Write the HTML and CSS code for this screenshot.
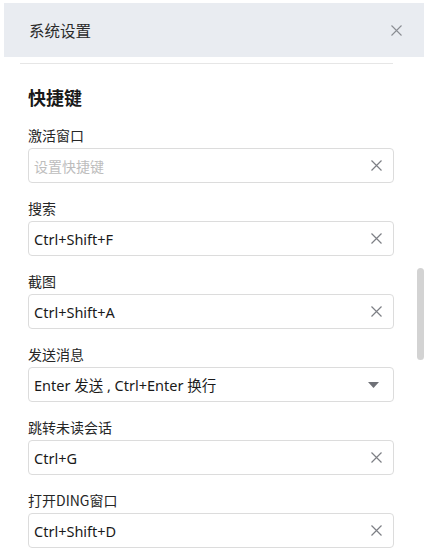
FILE: index.html
```html
<!DOCTYPE html>
<html lang="zh-CN">
<head>
<meta charset="utf-8">
<title>系统设置</title>
<link rel="stylesheet" href="styles.css">
</head>
<body>
<div class="panel">
  <div class="header">
    <span class="title">系统设置</span>
    <svg class="close" width="11" height="11" viewBox="0 0 11 11"><path d="M0.5 0.5L10.5 10.5M10.5 0.5L0.5 10.5" stroke="#8a8d93" stroke-width="1.1" fill="none"/></svg>
  </div>
  <div class="divider"></div>
  <div class="content">
    <h2 class="section">快捷键</h2>

    <div class="field">
      <div class="label">激活窗口</div>
      <div class="input"><span class="value placeholder">设置快捷键</span>
        <svg class="clear" width="11" height="11" viewBox="0 0 11 11"><path d="M0.5 0.5L10.5 10.5M10.5 0.5L0.5 10.5" stroke="#7d7f85" stroke-width="1.2" fill="none"/></svg></div>
    </div>

    <div class="field">
      <div class="label">搜索</div>
      <div class="input"><span class="value">Ctrl+Shift+F</span>
        <svg class="clear" width="11" height="11" viewBox="0 0 11 11"><path d="M0.5 0.5L10.5 10.5M10.5 0.5L0.5 10.5" stroke="#7d7f85" stroke-width="1.2" fill="none"/></svg></div>
    </div>

    <div class="field">
      <div class="label">截图</div>
      <div class="input"><span class="value">Ctrl+Shift+A</span>
        <svg class="clear" width="11" height="11" viewBox="0 0 11 11"><path d="M0.5 0.5L10.5 10.5M10.5 0.5L0.5 10.5" stroke="#7d7f85" stroke-width="1.2" fill="none"/></svg></div>
    </div>

    <div class="field">
      <div class="label">发送消息</div>
      <div class="input"><span class="value">Enter 发送 , Ctrl+Enter 换行</span>
        <svg class="caret" width="11" height="6" viewBox="0 0 11 6"><path d="M0 0H11L5.5 6Z" fill="#6f7177"/></svg></div>
    </div>

    <div class="field">
      <div class="label">跳转未读会话</div>
      <div class="input"><span class="value">Ctrl+G</span>
        <svg class="clear" width="11" height="11" viewBox="0 0 11 11"><path d="M0.5 0.5L10.5 10.5M10.5 0.5L0.5 10.5" stroke="#7d7f85" stroke-width="1.2" fill="none"/></svg></div>
    </div>

    <div class="field">
      <div class="label">打开DING窗口</div>
      <div class="input"><span class="value">Ctrl+Shift+D</span>
        <svg class="clear" width="11" height="11" viewBox="0 0 11 11"><path d="M0.5 0.5L10.5 10.5M10.5 0.5L0.5 10.5" stroke="#7d7f85" stroke-width="1.2" fill="none"/></svg></div>
    </div>
  </div>
  <div class="scroll-thumb"></div>
</div>
</body>
</html>
```
FILE: styles.css
```css
html, body {
  margin: 0;
  padding: 0;
  background: #ffffff;
  overflow: hidden;
  height: 548px;
}
body {
  font-family: "Noto Sans", "Noto Sans CJK SC", sans-serif;
  color: #222;
}
.panel {
  position: relative;
  margin: 3px 9px 0 4px;
  height: 545px;
  overflow: hidden;
}
.header {
  height: 54px;
  background: #e9ecf1;
  display: flex;
  align-items: center;
  justify-content: space-between;
  padding: 0 22px 0 25px;
}
.title {
  font-size: 15.5px;
  color: #2a2a2a;
  font-family: "Noto Sans CJK SC", sans-serif;
}
.close {
  display: block;
}
.divider {
  height: 1px;
  background: #e6e6e6;
  margin: 6px 31px 0 16px;
}
.content {
  padding: 0 30px 0 24px;
}
.section {
  margin: 21px 0 16px;
  font-size: 18px;
  line-height: 24px;
  font-weight: 700;
  color: #1a1a1a;
  font-family: "Noto Sans CJK SC", sans-serif;
}
.field {
  margin-bottom: 15px;
}
.label {
  font-size: 14px;
  line-height: 20px;
  margin-bottom: 3px;
  color: #262626;
  font-family: "Noto Sans CJK SC", sans-serif;
}
.input {
  height: 35px;
  box-sizing: border-box;
  border: 1px solid #dcdcdc;
  border-radius: 4px;
  display: flex;
  align-items: center;
  justify-content: space-between;
  padding: 0 11px 0 5px;
}
.value {
  font-size: 14.5px;
  color: #1a1a1a;
}
.placeholder {
  color: #bdbdbd;
  font-family: "Noto Sans CJK SC", sans-serif;
  font-size: 14px;
}
.clear, .caret {
  display: block;
}
.caret {
  margin-right: 3px;
}
.scroll-thumb {
  position: absolute;
  left: 413px;
  top: 265px;
  width: 7px;
  height: 92px;
  border-radius: 4px;
  background: #d3d3d3;
}
```
